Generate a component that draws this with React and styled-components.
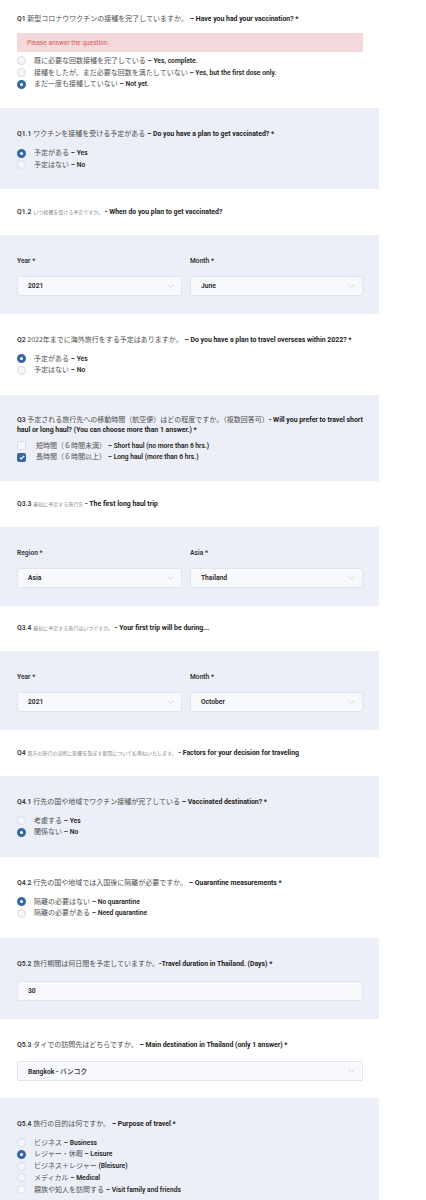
import React from 'react';
import styled, { createGlobalStyle } from 'styled-components';

const GlobalStyle = createGlobalStyle`
  html, body {
    margin: 0;
    padding: 0;
    background: #ffffff;
  }
  body {
    font-family: Roboto, "Noto Sans", "Noto Sans CJK JP", sans-serif;
    color: #333;
  }
  * {
    box-sizing: border-box;
  }
`;

const Page = styled.div`
  width: 379px;
`;

const Section = styled.section`
  background: ${p => (p.$alt ? '#ECEFF7' : '#ffffff')};
  padding: ${p => p.$top}px 16px ${p => p.$bottom}px 17px;
`;

const Title = styled.div`
  font-size: 7px;
  line-height: 10px;
  color: #474747;

  & > span {
    line-height: 1;
  }
`;

const Num = styled.span`
  font-size: 6.8px;
  font-weight: 600;
  color: #333;
`;

const Ja = styled.span`
  font-family: "Noto Sans CJK JP", sans-serif;
  font-size: ${p => (p.$small ? 5 : 7)}px;
  color: ${p => (p.$small ? '#8a8a8a' : '#4f4f4f')};
`;

const En = styled.span`
  font-size: 6.9px;
  font-weight: 700;
  color: #222;
`;

const ErrorBox = styled.div`
  margin-top: 9px;
  height: 19px;
  background: #F3D9DB;
  color: #E0575C;
  font-size: 6.6px;
  display: flex;
  align-items: center;
  padding-left: 10px;
`;

const Options = styled.div`
  margin-top: ${p => p.$gap}px;
  display: flex;
  flex-direction: column;
`;

const OptionRow = styled.div`
  height: 11.75px;
  display: flex;
  align-items: center;
  gap: ${p => (p.$box ? 10 : 8)}px;
  font-size: 7px;
  line-height: 1;
`;

const RadioDot = styled.span`
  flex: none;
  width: 9px;
  height: 9px;
  border-radius: 50%;
  border: ${p => (p.$on ? '3px solid #3567A6' : '1px solid #D9DCE4')};
  background: ${p => (p.$on ? '#ffffff' : '#F6F7FA')};
`;

const CheckSquare = styled.span`
  flex: none;
  width: 9px;
  height: 9px;
  border-radius: 1.5px;
  border: 1px solid ${p => (p.$on ? '#3567A6' : '#D9DCE4')};
  background: ${p => (p.$on ? '#3567A6' : '#F6F7FA')};
  display: flex;
  align-items: center;
  justify-content: center;
`;

const OptJa = styled.span`
  font-family: "Noto Sans CJK JP", sans-serif;
  color: #525252;
`;

const OptEn = styled.span`
  font-size: 6.7px;
  font-weight: 600;
  color: #222;
`;

const FieldGrid = styled.div`
  display: grid;
  grid-template-columns: 165px 173px;
  column-gap: 8px;
`;

const Field = styled.div`
  display: flex;
  flex-direction: column;
`;

const Label = styled.div`
  font-size: 6.7px;
  font-weight: 600;
  line-height: 10px;
  color: #333;
  margin-bottom: 10px;
`;

const SelectBox = styled.div`
  margin-top: ${p => p.$gap || 0}px;
  height: 20px;
  background: #F8F9FC;
  border: 1px solid #E2E5EE;
  border-radius: 2px;
  display: flex;
  align-items: center;
  justify-content: space-between;
  padding: 0 7px 0 10px;
  font-size: 6.7px;
  font-weight: 600;
  color: #222;
`;

const Chevron = () => (
  <svg width="7" height="4" viewBox="0 0 7 4">
    <polyline points="0.3,0.3 3.5,3.4 6.7,0.3" fill="none" stroke="#BFC3CD" strokeWidth="0.6" />
  </svg>
);

const Tick = () => (
  <svg width="6" height="5" viewBox="0 0 6 5">
    <polyline points="0.8,2.6 2.3,4 5.2,0.9" fill="none" stroke="#ffffff" strokeWidth="1.2" />
  </svg>
);

const Radio = ({ on, ja, en }) => (
  <OptionRow>
    <RadioDot $on={on} />
    <span>
      <OptJa>{ja}</OptJa> <OptEn>– {en}</OptEn>
    </span>
  </OptionRow>
);

const Check = ({ on, ja, en }) => (
  <OptionRow $box>
    <CheckSquare $on={on}>{on && <Tick />}</CheckSquare>
    <span>
      <OptJa>{ja}</OptJa> <OptEn>– {en}</OptEn>
    </span>
  </OptionRow>
);

const Select = ({ value, gap }) => (
  <SelectBox $gap={gap}>
    <span>{value}</span>
    <Chevron />
  </SelectBox>
);

const PairPanel = ({ left, right }) => (
  <Section $alt $top={21} $bottom={18}>
    <FieldGrid>
      <Field>
        <Label>{left[0]}</Label>
        <Select value={left[1]} />
      </Field>
      <Field>
        <Label>{right[0]}</Label>
        <Select value={right[1]} />
      </Field>
    </FieldGrid>
  </Section>
);

export default function App() {
  return (
    <Page>
      <GlobalStyle />

      <Section $top={14} $bottom={18}>
        <Title>
          <Num>Q1</Num> <Ja>新型コロナウワクチンの接種を完了していますか。</Ja> <En>– Have you had your vaccination? *</En>
        </Title>
        <ErrorBox>Please answer the question.</ErrorBox>
        <Options $gap={3}>
          <Radio ja="既に必要な回数接種を完了している" en="Yes, complete." />
          <Radio ja="接種をしたが、まだ必要な回数を満たしていない" en="Yes, but the first dose only." />
          <Radio on ja="まだ一度も接種していない" en="Not yet." />
        </Options>
      </Section>

      <Section $alt $top={21} $bottom={18.5}>
        <Title>
          <Num>Q1.1</Num> <Ja>ワクチンを接種を受ける予定がある</Ja> <En>– Do you have a plan to get vaccinated? *</En>
        </Title>
        <Options $gap={8}>
          <Radio on ja="予定がある" en="Yes" />
          <Radio ja="予定はない" en="No" />
        </Options>
      </Section>

      <Section $top={17.5} $bottom={18}>
        <Title>
          <Num>Q1.2</Num> <Ja $small>いつ接種を受ける予定ですか。</Ja> <En>- When do you plan to get vaccinated?</En>
        </Title>
      </Section>

      <PairPanel left={['Year *', '2021']} right={['Month *', 'June']} />

      <Section $top={21} $bottom={18.5}>
        <Title>
          <Num>Q2</Num> <Ja>2022年までに海外旅行をする予定はありますか。</Ja> <En>– Do you have a plan to travel overseas within 2022? *</En>
        </Title>
        <Options $gap={8}>
          <Radio on ja="予定がある" en="Yes" />
          <Radio ja="予定はない" en="No" />
        </Options>
      </Section>

      <Section $alt $top={20} $bottom={18}>
        <Title>
          <Num>Q3</Num> <Ja>予定される旅行先への移動時間（航空便）はどの程度ですか。（複数回答可）</Ja><En>- Will you prefer to travel short haul or long haul? (You can choose more than 1 answer.) *</En>
        </Title>
        <Options $gap={5}>
          <Check ja="短時間（６時間未満）" en="Short haul (no more than 6 hrs.)" />
          <Check on ja="長時間（６時間以上）" en="Long haul (more than 6 hrs.)" />
        </Options>
      </Section>

      <Section $top={17.5} $bottom={18}>
        <Title>
          <Num>Q3.3</Num> <Ja $small>最初に予定する旅行先</Ja> <En>- The first long haul trip</En>
        </Title>
      </Section>

      <PairPanel left={['Region *', 'Asia']} right={['Asia *', 'Thailand']} />

      <Section $top={17.5} $bottom={18}>
        <Title>
          <Num>Q3.4</Num> <Ja $small>最初に予定する旅行はいつですか。</Ja> <En>- Your first trip will be during...</En>
        </Title>
      </Section>

      <PairPanel left={['Year *', '2021']} right={['Month *', 'October']} />

      <Section $top={17.5} $bottom={18}>
        <Title>
          <Num>Q4</Num> <Ja $small>貴方の旅行の決断に影響を及ぼす要因についてお尋ねいたします。</Ja> <En>- Factors for your decision for traveling</En>
        </Title>
      </Section>

      <Section $alt $top={21} $bottom={18.5}>
        <Title>
          <Num>Q4.1</Num> <Ja>行先の国や地域でワクチン接種が完了している</Ja> <En>– Vaccinated destination? *</En>
        </Title>
        <Options $gap={8}>
          <Radio ja="考慮する" en="Yes" />
          <Radio on ja="関係ない" en="No" />
        </Options>
      </Section>

      <Section $top={21} $bottom={18.5}>
        <Title>
          <Num>Q4.2</Num> <Ja>行先の国や地域では入国後に隔離が必要ですか。</Ja> <En>– Quarantine measurements *</En>
        </Title>
        <Options $gap={8}>
          <Radio on ja="隔離の必要はない" en="No quarantine" />
          <Radio ja="隔離の必要がある" en="Need quarantine" />
        </Options>
      </Section>

      <Section $alt $top={21} $bottom={18}>
        <Title>
          <Num>Q5.2</Num> <Ja>旅行期間は何日間を予定していますか。</Ja><En>-Travel duration in Thailand. (Days) *</En>
        </Title>
        <SelectBox $gap={12}>
          <span>30</span>
        </SelectBox>
      </Section>

      <Section $top={21} $bottom={17}>
        <Title>
          <Num>Q5.3</Num> <Ja>タイでの訪問先はどちらですか。</Ja> <En>– Main destination in Thailand (only 1 answer) *</En>
        </Title>
        <Select gap={11} value={<>Bangkok - <OptJa>バンコク</OptJa></>} />
      </Section>

      <Section $alt $top={21} $bottom={20}>
        <Title>
          <Num>Q5.4</Num> <Ja>旅行の目的は何ですか。</Ja> <En>– Purpose of travel *</En>
        </Title>
        <Options $gap={8}>
          <Radio ja="ビジネス" en="Business" />
          <Radio on ja="レジャー・休暇" en="Leisure" />
          <OptionRow>
            <RadioDot />
            <span>
              <OptJa>ビジネス＋レジャー</OptJa> <OptEn>(Bleisure)</OptEn>
            </span>
          </OptionRow>
          <Radio ja="メディカル" en="Medical" />
          <Radio ja="親族や知人を訪問する" en="Visit family and friends" />
        </Options>
      </Section>
    </Page>
  );
}
